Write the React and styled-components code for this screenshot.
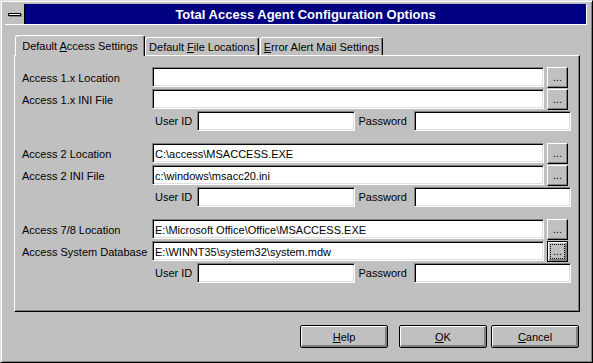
import styled, { createGlobalStyle } from 'styled-components';

const Global = createGlobalStyle`
  html, body {
    margin: 0;
    padding: 0;
    background: #c0c0c0;
  }
  body {
    font-family: "Liberation Sans", Arial, sans-serif;
    font-size: 11px;
    color: #000;
  }
`;

const Window = styled.div`
  box-sizing: border-box;
  width: 593px;
  height: 363px;
  background: #c0c0c0;
  border: 1px solid;
  border-color: #dfdfdf #000 #000 #dfdfdf;
  box-shadow: inset 1px 1px #fff, inset -1px -1px #808080;
  padding: 3px 5px 4px 4px;
  display: flex;
  flex-direction: column;
`;

const TitleBar = styled.div`
  display: flex;
  height: 20px;
  border-right: 1px solid #fff;
  border-bottom: 1px solid #fff;
`;

const SysMenu = styled.div`
  width: 19px;
  border-right: 1px solid #000;
  background: #c0c0c0;
  display: flex;
  align-items: center;
  justify-content: center;

  span {
    width: 11px;
    height: 1px;
    background: #fff;
    border: 1px solid #000;
    box-shadow: 1px 1px #808080;
  }
`;

const Caption = styled.div`
  flex: 1;
  background: #000080;
  color: #fff;
  font-weight: bold;
  font-size: 13px;
  display: flex;
  align-items: center;
  justify-content: center;
  padding-top: 1px;
`;

const Body = styled.div`
  flex: 1;
  display: flex;
  flex-direction: column;
  padding: 10px 7px 0 9px;
`;

const TabStrip = styled.div`
  display: flex;
  align-items: flex-end;
  height: 20px;
  padding-left: 1px;
`;

const Tab = styled.div`
  box-sizing: border-box;
  position: relative;
  width: ${({ $w }) => $w}px;
  height: ${({ $active }) => ($active ? 21 : 18)}px;
  margin-bottom: ${({ $active }) => ($active ? -1 : 0)}px;
  margin-left: ${({ $gap }) => $gap || 0}px;
  z-index: ${({ $active }) => ($active ? 1 : 0)};
  background: #c0c0c0;
  border-left: 1px solid #fff;
  border-top: 1px solid #fff;
  border-right: 1px solid #000;
  border-radius: 3px 3px 0 0;
  box-shadow: inset -1px 0 #808080;
  display: flex;
  align-items: center;
  justify-content: center;
  padding-top: ${({ $active }) => ($active ? 0 : 1)}px;
  white-space: nowrap;
`;

const Panel = styled.div`
  box-sizing: border-box;
  width: 566px;
  height: 257px;
  border: 1px solid;
  border-color: #fff #000 #000 #fff;
  box-shadow: inset -1px -1px #808080;
  padding: 11px 8px 0 7px;
  display: flex;
  flex-direction: column;
  gap: 12px;
`;

const Group = styled.div`
  display: flex;
  flex-direction: column;
  gap: 2px;
`;

const FileRow = styled.div`
  display: grid;
  grid-template-columns: 127px 1fr 21px;
  column-gap: 3px;
  padding-right: 3px;
  height: 20px;
  align-items: start;
`;

const Label = styled.span`
  white-space: nowrap;
  align-self: center;
  padding-left: ${({ $indent }) => $indent || 0}px;
`;

const Field = styled.input`
  box-sizing: border-box;
  height: 20px;
  width: 100%;
  margin: 0;
  padding: 1px 2px 0;
  font-family: "Liberation Sans", Arial, sans-serif;
  font-size: 11px;
  color: #000;
  background: #fff;
  border: 1px solid;
  border-color: #808080 #fff #fff #808080;
  box-shadow: inset 1px 1px #000, inset -1px -1px #dfdfdf;
  outline: none;
`;

const Browse = styled.button`
  box-sizing: border-box;
  width: 21px;
  height: 21px;
  margin: 0;
  padding: 0 0 4px;
  font-family: "Liberation Sans", Arial, sans-serif;
  font-size: 11px;
  line-height: 1;
  display: flex;
  align-items: flex-end;
  justify-content: center;
  background: #c0c0c0;
  border: 1px solid;
  border-color: ${({ $focus }) => ($focus ? '#000' : '#fff #000 #000 #fff')};
  box-shadow: ${({ $focus }) =>
    $focus
      ? 'inset 1px 1px #fff, inset -2px -2px #808080'
      : 'inset -1px -1px #808080'};
  outline: ${({ $focus }) => ($focus ? '1px dotted #000' : 'none')};
  outline-offset: -4px;
`;

const UserRow = styled.div`
  display: grid;
  grid-template-columns: 45px 1fr 59px 1fr;
  margin-left: 130px;
  height: 20px;
`;

const ButtonRow = styled.div`
  display: flex;
  justify-content: flex-end;
  margin-top: 13px;
  margin-right: 1px;
`;

const PushButton = styled.button`
  box-sizing: border-box;
  width: 88px;
  height: 23px;
  margin: 0 0 0 ${({ $gap }) => $gap || 0}px;
  padding: 0;
  font-family: "Liberation Sans", Arial, sans-serif;
  font-size: 11px;
  color: #000;
  background: #c0c0c0;
  border: 1px solid #000;
  border-radius: 2px;
  box-shadow: inset 1px 1px #fff, inset -1px -1px #808080, inset -2px -2px #808080;
`;

const groups = [
  ['Access 1.x Location', '', 'Access 1.x INI File', '', false],
  ['Access 2 Location', 'C:\\access\\MSACCESS.EXE', 'Access 2 INI File', 'c:\\windows\\msacc20.ini', false],
  ['Access 7/8 Location', 'E:\\Microsoft Office\\Office\\MSACCESS.EXE', 'Access System Database', 'E:\\WINNT35\\system32\\system.mdw', true],
];

const FileLine = ({ label, value, focus }) => (
  <FileRow>
    <Label>{label}</Label>
    <Field readOnly defaultValue={value} />
    <Browse $focus={focus}>...</Browse>
  </FileRow>
);

export default function App() {
  return (
    <>
      <Global />
      <Window>
        <TitleBar>
          <SysMenu><span /></SysMenu>
          <Caption>Total Access Agent Configuration Options</Caption>
        </TitleBar>
        <Body>
          <TabStrip>
            <Tab $active $w={130}><span>Default <u>A</u>ccess Settings</span></Tab>
            <Tab $w={114}><span>Default <u>F</u>ile Locations</span></Tab>
            <Tab $w={123} $gap={1}><span><u>E</u>rror Alert Mail Settings</span></Tab>
          </TabStrip>
          <Panel>
            {groups.map(([l1, v1, l2, v2, focus]) => (
              <Group key={l1}>
                <FileLine label={l1} value={v1} />
                <FileLine label={l2} value={v2} focus={focus} />
                <UserRow>
                  <Label $indent={3}>User ID</Label>
                  <Field readOnly defaultValue="" />
                  <Label $indent={4}>Password</Label>
                  <Field readOnly type="password" defaultValue="" />
                </UserRow>
              </Group>
            ))}
          </Panel>
          <ButtonRow>
            <PushButton><u>H</u>elp</PushButton>
            <PushButton $gap={11}><u>O</u>K</PushButton>
            <PushButton $gap={4}><u>C</u>ancel</PushButton>
          </ButtonRow>
        </Body>
      </Window>
    </>
  );
}
